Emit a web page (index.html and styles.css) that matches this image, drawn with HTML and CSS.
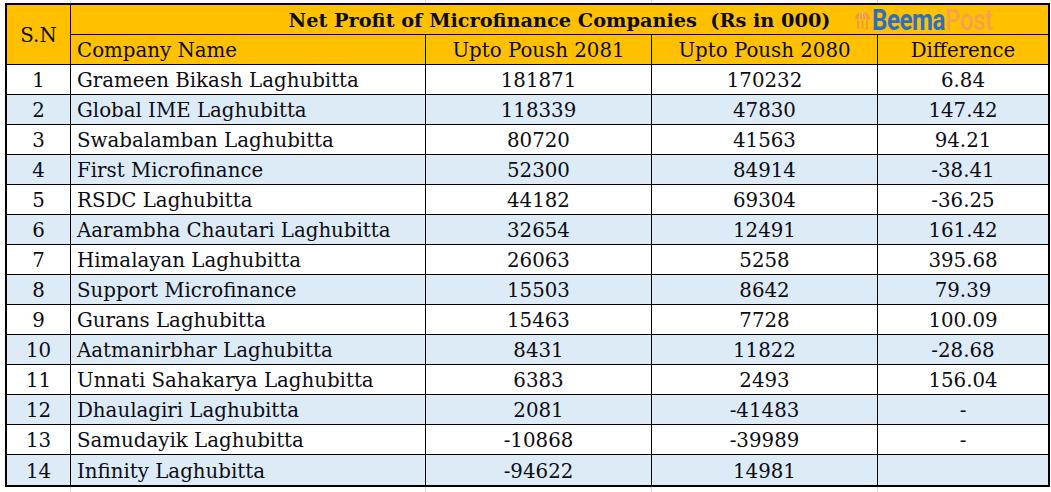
FILE: index.html
```html
<!DOCTYPE html>
<html>
<head>
<meta charset="utf-8">
<link rel="stylesheet" href="styles.css">
</head>
<body>
<div class="sheet">
<table class="profit">
  <colgroup>
    <col class="c-sn"><col class="c-name"><col class="c-num"><col class="c-num"><col class="c-diff">
  </colgroup>
  <thead>
    <tr class="title-row">
      <th class="sn-head" rowspan="2">S.N</th>
      <th class="title" colspan="4">Net Profit of Microfinance Companies&nbsp;&nbsp;(Rs in 000)
        <span class="logo">
          <svg class="umbrella" width="17" height="19" viewBox="0 0 17 19">
            <path d="M1 8 Q1.5 1.5 8.5 1 Q15.5 1.5 16 8 Z" fill="#f39a40"/>
            <path d="M5 8 Q5.5 2.5 8.5 1.2 M12 8 Q11.5 2.5 8.5 1.2 M8.5 1 V8" stroke="#fdc46b" stroke-width="0.9" fill="none"/>
            <rect x="3" y="9.5" width="2" height="8.5" fill="#f39a40"/>
            <rect x="7.5" y="9.5" width="2" height="8.5" fill="#f39a40"/>
            <rect x="12" y="9.5" width="2" height="8.5" fill="#f39a40"/>
          </svg><span class="brand"><span class="beema">Beema</span><span class="post">Post</span></span>
        </span>
      </th>
    </tr>
    <tr class="head-row">
      <th class="name">Company Name</th>
      <th>Upto Poush 2081</th>
      <th>Upto Poush 2080</th>
      <th>Difference</th>
    </tr>
  </thead>
  <tbody>
    <tr><td>1</td><td class="name">Grameen Bikash Laghubitta</td><td>181871</td><td>170232</td><td>6.84</td></tr>
    <tr><td>2</td><td class="name">Global IME Laghubitta</td><td>118339</td><td>47830</td><td>147.42</td></tr>
    <tr><td>3</td><td class="name">Swabalamban Laghubitta</td><td>80720</td><td>41563</td><td>94.21</td></tr>
    <tr><td>4</td><td class="name">First Microfinance</td><td>52300</td><td>84914</td><td>-38.41</td></tr>
    <tr><td>5</td><td class="name">RSDC Laghubitta</td><td>44182</td><td>69304</td><td>-36.25</td></tr>
    <tr><td>6</td><td class="name">Aarambha Chautari Laghubitta</td><td>32654</td><td>12491</td><td>161.42</td></tr>
    <tr><td>7</td><td class="name">Himalayan Laghubitta</td><td>26063</td><td>5258</td><td>395.68</td></tr>
    <tr><td>8</td><td class="name">Support Microfinance</td><td>15503</td><td>8642</td><td>79.39</td></tr>
    <tr><td>9</td><td class="name">Gurans Laghubitta</td><td>15463</td><td>7728</td><td>100.09</td></tr>
    <tr><td>10</td><td class="name">Aatmanirbhar Laghubitta</td><td>8431</td><td>11822</td><td>-28.68</td></tr>
    <tr><td>11</td><td class="name">Unnati Sahakarya Laghubitta</td><td>6383</td><td>2493</td><td>156.04</td></tr>
    <tr><td>12</td><td class="name">Dhaulagiri Laghubitta</td><td>2081</td><td>-41483</td><td>-</td></tr>
    <tr><td>13</td><td class="name">Samudayik Laghubitta</td><td>-10868</td><td>-39989</td><td>-</td></tr>
    <tr><td>14</td><td class="name">Infinity Laghubitta</td><td>-94622</td><td>14981</td><td></td></tr>
  </tbody>
</table>
</div>
</body>
</html>
```
FILE: styles.css
```css
html, body {
  margin: 0;
  padding: 0;
  background: #fff;
}

.sheet {
  width: 1051px;
  height: 492px;
  box-sizing: border-box;
  padding: 3px 0 0 5px;
  background-color: #fff;
  background-image:
    linear-gradient(to right,
      transparent 70px, #dcdcdc 70px, #dcdcdc 71px, transparent 71px,
      transparent 425px, #dcdcdc 425px, #dcdcdc 426px, transparent 426px,
      transparent 651px, #dcdcdc 651px, #dcdcdc 652px, transparent 652px,
      transparent 877px, #dcdcdc 877px, #dcdcdc 878px, transparent 878px);
}

.profit {
  table-layout: fixed;
  width: 1045px;
  border-collapse: separate;
  border-spacing: 0;
  border: 2px solid #000;
  font-family: "DejaVu Serif", "Liberation Serif", serif;
  font-size: 19.8px;
  color: #0c0c14;
}

.c-sn { width: 64px; }
.c-name { width: 355px; }
.c-num { width: 226px; }
.c-diff { width: 170px; }

.profit th,
.profit td {
  box-sizing: border-box;
  height: 30px;
  padding: 2px 0 0 0;
  border-right: 1px solid #000;
  border-bottom: 1px solid #000;
  text-align: center;
  vertical-align: middle;
  white-space: nowrap;
  font-weight: normal;
  line-height: 27px;
}

.profit th:last-child,
.profit td:last-child {
  border-right: none;
}

.profit tbody tr:last-child td {
  border-bottom: none;
}

.profit thead th {
  background: #ffc000;
}

.profit .title {
  font-weight: bold;
  font-size: 19.3px;
  position: relative;
}

.profit .name {
  text-align: left;
  padding-left: 6px;
}

.profit tbody tr:nth-child(even) td {
  background: #ddebf7;
}

.logo {
  position: absolute;
  right: 50px;
  top: 2px;
  display: flex;
  align-items: flex-end;
  height: 26px;
}

.umbrella {
  margin-right: 1px;
  margin-bottom: 3px;
}

.brand {
  display: block;
  font-family: Roboto, "Liberation Sans", sans-serif;
  font-weight: bold;
  font-size: 29px;
  line-height: 26px;
  letter-spacing: -0.5px;
  transform: scaleX(0.83);
  transform-origin: left bottom;
  margin-right: -19px;
}

.beema {
  color: #2f6fbd;
}

.post {
  color: #f5a24a;
  font-weight: 500;
}
```
